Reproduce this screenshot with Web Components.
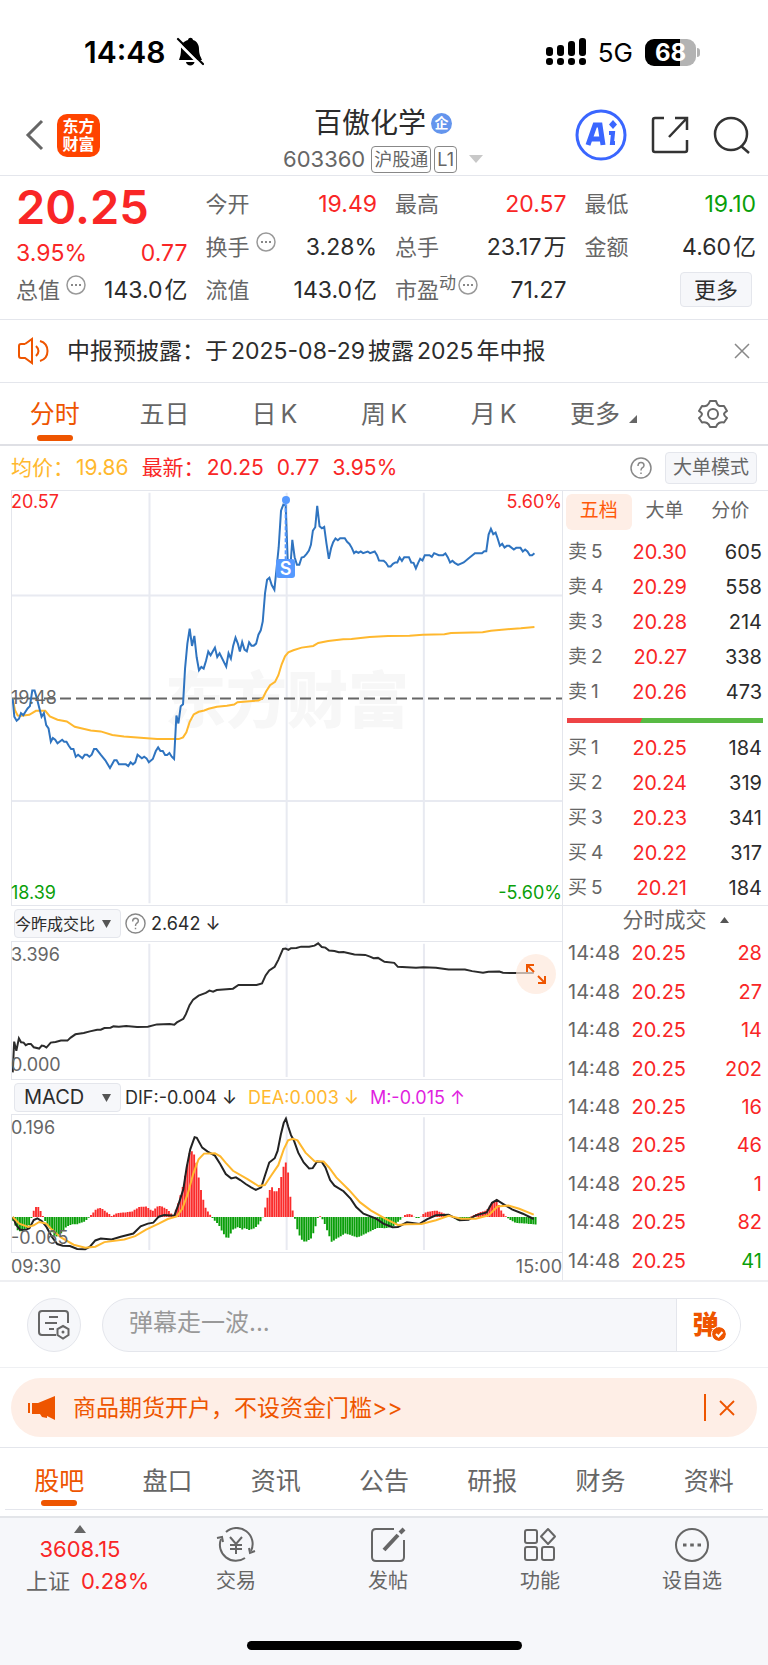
<!DOCTYPE html>
<html lang="zh-CN">
<head>
<meta charset="utf-8">
<meta name="viewport" content="width=device-width, initial-scale=1">
<title>百傲化学 603360</title>
<style>
    :root {
        --red: #f92626;
        --green: #0a9f0a;
        --orange: #ee5500;
        --yellow: #ffb82e;
        --ink: #2c2c2c;
        --grey: #666;
        --line: #e4e6ec;
        --panel: #f6f7fa;
        --peach: #feeee6;
    }
    body {
        margin: 0;
        background: #fff;
        color: var(--ink);
        font-family: Inter, "Noto Sans CJK SC", sans-serif;
        font-size: 22px;
    }
    .market {
        display: grid;
        grid-template-columns: minmax(0, 1fr) 205px;
        border-bottom: 2px solid #eeeff2;
    }
    .charts {
        padding-left: 11px;
        border-right: 1px solid var(--line);
    }
</style>
</head>
<body>
<status-bar></status-bar>
<stock-header>
    <span slot="name">百傲化学</span>
    <span slot="code">603360</span>
</stock-header>
<quote-panel></quote-panel>
<notice-bar>中报预披露：于<i></i>2025-08-29<i></i>披露<i></i>2025<i></i>年中报</notice-bar>
<period-tabs></period-tabs>
<trend-legend></trend-legend>
<div class="market">
    <div class="charts">
        <price-chart></price-chart>
        <ratio-chart></ratio-chart>
        <macd-chart></macd-chart>
    </div>
    <div class="book">
        <order-book></order-book>
        <tick-list></tick-list>
    </div>
</div>
<danmu-bar></danmu-bar>
<promo-banner>商品期货开户，不设资金门槛&gt;&gt;</promo-banner>
<info-tabs></info-tabs>
<bottom-nav></bottom-nav>

<script>
const reset = `
    *, :host{ box-sizing: border-box; }
    :host{ display: block; }
    button, input, select{ font: inherit; color: inherit; border: 0; background: none; padding: 0; margin: 0; }
    a{ color: inherit; text-decoration: none; }
    svg{ display: block; flex: none; }
    .red{ color: var(--red); }
    .green{ color: var(--green); }
`

class BaseElement extends HTMLElement {
    constructor() {
        super()
        this.attachShadow({mode: 'open'})
    }

    connectedCallback() {
        const template = document.createElement('template')
        template.innerHTML = `<style>${reset}${this.getStyles()}</style>${this.getMarkup()}`
        this.shadowRoot.appendChild(template.content.cloneNode(true))
    }
}

class StatusBar extends BaseElement {
    getMarkup() {
        return `
            <div class="left">
                <time>14:48</time>
                <svg width="28" height="30" viewBox="0 0 28 30">
                    <path d="M3 23 C4 20 5 18 5 12 C5 7 8 4 12 3 C12.500 0 16.500 0 17 3 C21 4 23 8 23 12 C23 18 25 20 26 23 Z" fill="#000"/>
                    <path d="M10 25 H18.500 C18 29.500 10.500 29.500 10 25Z" fill="#000"/>
                    <path d="M1 4.500 L25.500 29" stroke="#fff" stroke-width="3"/>
                    <path d="M2 2 L27 27" stroke="#000" stroke-width="2.200" stroke-linecap="round"/>
                </svg>
            </div>
            <div class="right">
                <svg width="40" height="28" viewBox="0 0 40 28">
                    <rect x="0" y="9" width="7" height="9" rx="3"/>
                    <rect x="11" y="7" width="7" height="11" rx="3"/>
                    <rect x="22" y="3" width="7" height="15" rx="3"/>
                    <rect x="33" y="0" width="7" height="18" rx="3"/>
                    <rect x="0" y="20" width="7" height="7" rx="3"/>
                    <rect x="11" y="20" width="7" height="7" rx="3"/>
                    <rect x="22" y="20" width="7" height="7" rx="3"/>
                    <rect x="33" y="20" width="7" height="7" rx="3"/>
                </svg>
                <span class="net">5G</span>
                <span class="battery">68</span><i></i>
            </div>
        `
    }

    getStyles() {
        return `
            :host{ display: flex; justify-content: space-between; align-items: center; height: 104px; padding: 0 68px 0 84px; color: #000; }
            .left, .right{ display: flex; align-items: center; }
            .left{ gap: 11px; }
            time{ font-size: 30px; font-weight: 600; }
            .net{ font-size: 26px; margin: 0 12px; }
            .battery{ width: 51px; height: 27px; border-radius: 9px; background: linear-gradient(90deg, #000 68%, #b3b3b3 68%); color: #fff; font-size: 24px; line-height: 27px; font-weight: 700; text-align: center; }
            i{ width: 3px; height: 9px; margin-left: 1px; border-radius: 0 4px 4px 0; background: #b3b3b3; }
        `
    }
}

class StockHeader extends BaseElement {
    getMarkup() {
        return `
            <div class="side">
                <button aria-label="返回"><svg width="20" height="32" viewBox="0 0 20 32"><path d="M17 2 L3 16 L17 30" fill="none" stroke="#666" stroke-width="3"/></svg></button>
                <a class="logo" href="#">东方<br>财富</a>
            </div>
            <div class="title">
                <h1><slot name="name"></slot><span class="badge">企</span></h1>
                <p><slot name="code"></slot><span class="tag">沪股通</span><span class="tag">L1</span>
                <svg width="14" height="8"><path d="M0 0H14L7 8Z" fill="#c8c8c8"/></svg></p>
            </div>
            <div class="side end">
                <button aria-label="Ai"><svg width="52" height="52" viewBox="0 0 52 52">
                    <circle cx="26" cy="26" r="24" fill="#fff" stroke="#3a66ff" stroke-width="3"/>
                    <path d="M13 36 L20 16 H25 L28 36 M15 30 H27" fill="none" stroke="#3a66ff" stroke-width="5"/>
                    <path d="M34 24 H38 L37 34 H40" fill="none" stroke="#3a66ff" stroke-width="4"/>
                    <path d="M38 11 L42 15.500 L38 20 L34 15.500Z" fill="#3a66ff"/>
                </svg></button>
                <button aria-label="分享"><svg width="38" height="38" viewBox="0 0 38 38" fill="none" stroke="#333" stroke-width="2.500">
                    <path d="M13 2 H4 Q2 2 2 4 V34 Q2 36 4 36 H34 Q36 36 36 34 V24"/>
                    <path d="M24 2 H36 V14 M36 2 L18 21"/>
                </svg></button>
                <button aria-label="搜索"><svg width="38" height="38" viewBox="0 0 38 38" fill="none" stroke="#333" stroke-width="2.500">
                    <circle cx="18" cy="18" r="16"/><path d="M28 30 L36 37"/>
                </svg></button>
            </div>
        `
    }

    getStyles() {
        return `
            :host{ display: grid; grid-template-columns: 1fr auto 1fr; align-items: center; height: 72px; padding: 0 17px; border-bottom: 1px solid var(--line); }
            .side{ display: flex; align-items: center; gap: 12px; height: 62px; align-self: start; padding-left: 8px; }
            .end{ justify-content: flex-end; gap: 24px; padding: 0; }
            .logo{ width: 43px; height: 43px; border-radius: 10px; background: #ff4400; color: #fff; font-size: 16px; line-height: 18px; font-weight: 700; text-align: center; padding-top: 3px; }
            .title{ padding: 0 2px 6px 0; }
            h1{ display: flex; align-items: center; justify-content: center; gap: 5px; margin: 0; font-size: 28px; line-height: 38px; font-weight: 400; }
            .badge{ width: 21px; height: 21px; border-radius: 50%; background: #6495ed; color: #fff; font-size: 14px; line-height: 20px; font-weight: 700; text-align: center; }
            p{ display: flex; align-items: center; gap: 3px; margin: 0; color: var(--grey); font-size: 22px; line-height: 34px; white-space: nowrap; }
            .tag{ border: 1px solid #888; border-radius: 4px; font-size: 18px; line-height: 25px; padding: 0 2px; }
            .tag:first-of-type{ margin-left: 3px; }
            p svg{ margin-left: 9px; }
        `
    }
}

const more = '<svg class="more" width="20" height="20" viewBox="0 0 20 20"><circle cx="10" cy="10" r="9" fill="none" stroke="#999" stroke-width="1.500"/><path d="M5 10h2M9 10h2M13 10h2" stroke="#888" stroke-width="2"/></svg>'
const cell = (label, value, color = '') => `<div class="cell"><dt>${label}</dt><dd class="${color}">${value}</dd></div>`

class QuotePanel extends BaseElement {
    getMarkup() {
        return `
            <dl>
                <div class="main red"><strong>20.25</strong></div>
                <div class="change red"><span>3.95%</span><span>0.77</span></div>
                ${cell('总值' + more, '143.0<i></i>亿')}
            </dl>
            <dl>${cell('今开', '19.49', 'red')}${cell('换手' + more, '3.28%')}${cell('流值', '143.0<i></i>亿')}</dl>
            <dl>${cell('最高', '20.57', 'red')}${cell('总手', '23.17<i></i>万')}${cell('市盈<sup>动</sup>' + more, '71.27')}</dl>
            <dl>${cell('最低', '19.10', 'green')}${cell('金额', '4.60<i></i>亿')}<div class="cell end"><button>更多</button></div></dl>
        `
    }

    getStyles() {
        return `
            :host{ display: grid; grid-template-columns: repeat(4, minmax(0, 1fr)); gap: 18px; height: 144px; padding: 6px 12px 0 16px; border-bottom: 1px solid var(--line); }
            dl{ margin: 0; }
            dt{ display: flex; align-items: center; color: var(--grey); }
            dd{ margin: 0; font-size: 23px; white-space: nowrap; }
            dd i{ display: inline-block; width: 2px; }
            .cell{ display: flex; justify-content: space-between; align-items: center; height: 43px; line-height: 32px; }
            .end{ justify-content: flex-end; padding-right: 4px; }
            .main{ height: 52px; line-height: 50px; font-size: 47px; }
            strong{ font-weight: 600; }
            .change{ display: flex; justify-content: space-between; align-items: flex-end; height: 34px; font-size: 23px; line-height: 30px; }
            .more{ margin: -9px 0 0 6px; }
            sup{ font-size: 17px; line-height: 17px; margin-top: -12px; }
            sup + .more{ margin-left: 2px; }
            button{ width: 72px; height: 35px; border: 1px solid var(--line); border-radius: 4px; background: var(--panel); }
        `
    }
}

class NoticeBar extends BaseElement {
    getMarkup() {
        return `
            <svg width="32" height="28" viewBox="0 0 32 28" fill="none" stroke="#ee5500" stroke-width="2">
                <path d="M7 7 H3 Q1 7 1 9 V19 Q1 21 3 21 H7 L14 26 V2 L7 7"/>
                <path d="M18 9 Q23 14 18 19 M22 4 C32 7 32 21 22 24"/>
            </svg>
            <p><slot></slot></p>
            <button aria-label="关闭"><svg width="16" height="16" viewBox="0 0 16 16"><path d="M1 1L15 15M15 1L1 15" stroke="#888" stroke-width="1.500"/></svg></button>
        `
    }

    getStyles() {
        return `
            :host{ display: flex; align-items: center; height: 63px; padding: 0 18px; border-bottom: 1px solid var(--line); }
            p{ flex: 1; margin: 0 0 0 17px; font-size: 23px; line-height: 32px; white-space: nowrap; }
            ::slotted(i){ display: inline-block; width: 3px; }
        `
    }
}

class PeriodTabs extends BaseElement {
    getMarkup() {
        return `
            <button class="on">分时</button><button>五日</button>
            <button>日<i></i>K</button><button>周<i></i>K</button><button>月<i></i>K</button>
            <button class="drop">更多<svg width="8" height="8"><path d="M8 0V8H0Z" fill="#666"/></svg></button>
            <button aria-label="设置"><svg class="gear" width="30" height="30" viewBox="0 0 30 30" fill="none" stroke="#666" stroke-width="2">
                <path d="M12 2 H18 Q19 6 21.500 7 Q24 7 26 7 L29 12 Q26 14 26 15 Q26 17 29 19 L26 23.500 Q23 23 21 24 Q19 25 18 28 H12 Q11 25 9 24 Q7 23 4 23.500 L1 19 Q4 17 4 15 Q4 14 1 12 L4 7 Q7 7.500 9 6.500 Q11 5 12 2Z" stroke-linejoin="round"/>
                <circle cx="15" cy="15" r="5"/>
            </svg></button>
        `
    }

    getStyles() {
        return `
            :host{ display: flex; height: 63px; border-bottom: 2px solid #dfe0e5; color: var(--grey); }
            button{ flex: 1; position: relative; font-size: 25px; line-height: 30px; }
            i{ display: inline-block; width: 4px; }
            .on{ color: var(--orange); }
            .on::after{ content: ""; position: absolute; left: 50%; bottom: 3px; width: 36px; height: 6px; margin-left: -18px; border-radius: 3px; background: var(--orange); }
            .drop svg{ display: inline-block; margin-left: 9px; }
            .gear{ margin: 0 auto; }
        `
    }
}

const help = size => `<svg class="help" width="${size}" height="${size}" viewBox="0 0 22 22" fill="none" stroke="#888" stroke-width="1.500"><circle cx="11" cy="11" r="10"/><path d="M8 9 Q8 5.500 11 5.500 Q14 5.500 14 8.500 Q14 10 12 11 Q11 11.800 11 13.500 M11 15.500V17"/></svg>`

class TrendLegend extends BaseElement {
    getMarkup() {
        return `
            <span class="avg">均价：<i></i>19.86</span>
            <span class="red">最新：<i></i>20.25</span><span class="red">0.77</span><span class="red">3.95%</span>
            ${help(22)}
            <button>大单模式</button>
        `
    }

    getStyles() {
        return `
            :host{ display: flex; align-items: center; gap: 13px; height: 44px; padding: 0 11px; font-size: 21px; line-height: 30px; white-space: nowrap; }
            i{ display: inline-block; width: 2px; }
            .avg{ color: var(--yellow); }
            .help{ margin-left: auto; }
            button{ height: 32px; padding: 0 7px; border: 1px solid var(--line); border-radius: 4px; background: var(--panel); color: var(--grey); font-size: 19px; }
        `
    }
}

// charts: points are kept in each chart's own viewBox units and stretch with the column
const chartStyles = `
    .plot{ position: relative; border-top: 1px solid var(--line); border-bottom: 1px solid var(--line); border-left: 1px solid var(--line); color: var(--grey); font-size: 18px; line-height: 22px; }
    .plot svg.lines{ width: 100%; height: 100%; }
    .plot path{ vector-effect: non-scaling-stroke; fill: none; }
    .grid{ stroke: #e8eaf1; stroke-width: 2px; }
    .label{ position: absolute; left: 0; margin-left: -1px; }
    .right{ left: auto; right: 0; }
    .bar{ display: flex; align-items: center; height: 35px; padding-left: 3px; font-size: 18px; white-space: nowrap; }
    .pick{ position: relative; width: 107px; height: 29px; border: 1px solid var(--line); border-radius: 4px; background: var(--panel); }
    .pick svg{ position: absolute; right: 9px; top: 10px; pointer-events: none; }
    select{ width: 100%; height: 100%; appearance: none; }
`
const picker = (label, value) => `<div class="pick"><select aria-label="${label}"><option>${value}</option></select><svg width="9" height="8"><path d="M0 0H9L4.500 8Z" fill="#555"/></svg></div>`

class PriceChart extends BaseElement {
    getMarkup() {
        const price = '35,655 40,710 47,722 54,716 60,699 67,705 74,694 80,685 87,678 94,631 101,631 108,655 115,683 122,710 129,699 136,735 143,745 150,785 156,774 163,779 170,790 184,779 190,785 197,785 204,797 211,807 218,807 225,830 232,824 245,835 252,824 259,824 266,830 273,824 280,807 287,807 300,824 314,841 328,864 341,841 348,841 355,853 376,853 383,858 390,847 397,853 404,847 411,824 424,835 431,830 438,835 445,847 457,837 466,813 473,802 480,813 487,813 494,825 500,825 507,819 514,830 521,837 528,706 534,730 541,678 548,672 554,565 561,490 568,445 575,497 582,467 589,531 596,570 603,560 610,565 617,542 624,514 631,525 644,502 651,530 658,519 678,559 685,519 692,535 699,496 706,472 713,490 719,514 726,485 733,508 740,513 747,486 754,496 761,496 768,490 775,463 782,450 788,423 795,337 801,298 808,292 815,314 823,328 829,270 836,200 843,90 850,72 857,75 863,235 871,262 877,178 884,230 891,253 898,253 905,231 912,229 920,220 927,210 933,193 939,150 946,140 952,76 959,137 966,143 973,139 980,190 987,235 994,202 1000,185 1007,174 1014,179 1021,173 1035,173 1042,184 1049,190 1056,202 1063,218 1069,213 1076,217 1083,213 1090,218 1104,213 1111,218 1125,213 1132,224 1138,240 1152,241 1159,247 1166,258 1173,258 1180,250 1187,246 1193,246 1200,231 1207,241 1214,230 1228,230 1235,246 1242,247 1249,264 1256,247 1262,235 1269,240 1276,224 1290,224 1297,229 1304,218 1318,224 1331,224 1338,219 1345,230 1352,246 1359,241 1366,247 1376,253 1393,246 1410,232 1427,218 1448,218 1455,212 1461,212 1468,162 1475,145 1482,161 1489,156 1495,173 1502,196 1509,190 1516,201 1523,196 1530,196 1544,207 1551,202 1564,202 1571,213 1578,207 1585,213 1592,224 1599,224 1606,218'
        const average = '35,655 42,690 50,706 62,707 85,704 105,692 133,692 147,709 170,719 198,724 222,740 270,751 300,754 335,765 370,769 430,774 470,777 535,777 548,772 558,757 568,725 580,703 595,695 612,691 625,686 650,680 680,677 702,673 712,666 775,661 788,654 798,634 810,615 825,605 835,585 845,552 855,528 865,516 880,510 905,502 940,497 955,488 985,482 1030,477 1055,476 1110,470 1165,467 1230,466 1270,463 1335,462 1355,458 1450,456 1475,451 1535,446 1565,444 1606,440'
        return `
            <div class="plot">
                <span class="watermark">东方财富</span>
                <svg class="lines" viewBox="33 31 1656 1245" preserveAspectRatio="none">
                    <path class="grid" d="M447 36V1271M860 36V1271M1273 36V1271M33 345H1689M33 963H1689"/>
                    <path d="M33 655H1689" stroke="#666" stroke-width="2" stroke-dasharray="11 5"/>
                    <path d="M${average}" stroke="#ffb82e" stroke-width="2"/>
                    <path d="M${price}" stroke="#2f74c0" stroke-width="2"/>
                    <path d="M857 65V240" stroke="#5599ff" stroke-width="2" stroke-dasharray="4 2"/>
                </svg>
                <i class="dot"></i><span class="sell">S</span>
                <span class="label top red">20.57</span><span class="label top right red">5.60%</span>
                <span class="label mid">19.48</span>
                <span class="label low green">18.39</span><span class="label low right green">-5.60%</span>
            </div>
        `
    }

    getStyles() {
        return chartStyles + `
            .plot{ height: 416px; }
            .top{ top: 0; }
            .mid{ top: 196px; }
            .low{ bottom: 1px; }
            .watermark{ position: absolute; left: 50%; top: 174px; transform: translateX(-50%); color: #f7f7f7; font: 900 61px/64px "Noto Sans CJK SC", sans-serif; white-space: nowrap; }
            .plot svg{ position: relative; }
            .dot, .sell{ position: absolute; left: 50%; background: #5599ff; }
            .dot{ top: 5px; width: 8px; height: 8px; margin-left: -5px; border-radius: 50%; }
            .sell{ top: 68px; width: 19px; height: 19px; margin-left: -11px; border-radius: 3px; color: #fff; font-size: 18px; line-height: 19px; font-weight: 600; text-align: center; }
        `
    }
}

class RatioChart extends BaseElement {
    getMarkup() {
        const ratio = '32,548 36,455 42,483 49,445 55,457 62,458 68,466 75,462 82,462 90,472 105,476 112,467 118,468 125,473 137,458 150,456 165,452 183,452 192,443 205,433 228,429 245,424 265,419 275,419 285,414 302,413 310,409 325,410 345,408 375,411 405,410 430,403 465,402 478,404 485,397 503,386 510,372 520,345 530,328 545,316 565,308 575,301 585,304 595,299 640,295 655,284 705,284 720,279 730,255 740,240 755,229 765,208 778,175 785,174 793,178 800,173 815,172 828,168 850,168 865,165 875,158 885,169 895,171 905,180 920,181 932,185 945,184 975,192 1005,193 1018,198 1028,203 1040,202 1058,214 1085,217 1095,229 1145,232 1165,230 1200,232 1235,237 1280,237 1300,242 1330,247 1345,244 1375,243 1385,247 1430,248 1470,248'
        return `
            <div class="bar">${picker('指标', '今昨成交比')}${help(21)}<span>2.642 ↓</span></div>
            <div class="plot">
                <svg class="lines" viewBox="30 154 1518 414" preserveAspectRatio="none">
                    <path class="grid" d="M409 159V562M788 159V562M1167 159V562"/>
                    <path d="M${ratio}" stroke="#2c2c2c" stroke-width="2"/>
                </svg>
                <button aria-label="全屏"><svg width="22" height="22" viewBox="0 0 22 22" fill="none" stroke="#ee5500" stroke-width="2">
                    <path d="M2 9V2H9M2 2L9 9M20 13V20H13M20 20L13 13"/></svg></button>
                <span class="label top">3.396</span><span class="label low">0.000</span>
            </div>
        `
    }

    getStyles() {
        return chartStyles + `
            .plot{ height: 139px; }
            .top{ top: 2px; }
            .low{ bottom: 3px; }
            select{ font-size: 16px; }
            .help{ margin: 0 5px 0 4px; }
            button{ position: absolute; right: 6px; top: 12px; width: 40px; height: 40px; border-radius: 50%; background: rgba(254, 232, 220, .7); }
            button svg{ margin: 0 auto; }
        `
    }
}

class MacdChart extends BaseElement {
    // one bar a minute, heights read off a coarse envelope around the zero line
    getBars(sign) {
        const shape = [[30, -4], [45, -40], [55, -44], [65, -40], [80, -22], [86, 10], [95, 30], [103, 30], [112, 12], [118, -5], [130, -28], [150, -62], [165, -50], [180, -30], [195, -22], [210, -22], [230, -14], [240, -4], [250, 8], [262, 24], [275, 28], [290, 16], [305, 3], [320, 12], [340, 14], [360, 16], [380, 30], [400, 32], [418, 18], [432, 33], [445, 32], [460, 22], [475, 4], [485, 30], [500, 85], [512, 150], [522, 205], [532, 192], [540, 160], [548, 100], [556, 60], [565, 25], [575, 10], [585, -6], [600, -22], [612, -48], [625, -68], [640, -38], [655, -30], [665, -38], [675, -32], [682, -40], [700, -34], [712, -20], [722, -3], [730, 35], [740, 80], [748, 90], [757, 72], [768, 90], [776, 140], [783, 165], [790, 165], [795, 90], [802, 30], [810, 0], [818, -40], [828, -68], [840, -76], [855, -66], [865, -40], [875, 0], [880, 3], [890, -12], [903, -50], [912, -75], [925, -66], [950, -50], [985, -62], [1010, -48], [1040, -32], [1060, -34], [1080, -30], [1100, -10], [1115, 6], [1130, 10], [1145, -3], [1155, -3], [1170, 14], [1200, 20], [1225, 10], [1240, 3], [1260, -10], [1285, -8], [1300, 4], [1320, 14], [1340, 20], [1355, 45], [1368, 52], [1380, 20], [1390, 5], [1400, -5], [1420, -18], [1470, -22], [1480, -24]]
        let d = ''
        for (let i = 0; i < 229; i++) {
            const x = 33 + i * 6.325
            const n = shape.findIndex(point => point[0] > x)
            const [x0, h0] = shape[n - 1]
            const [x1, h1] = shape[n]
            const h = h0 + (h1 - h0) * (x - x0) / (x1 - x0)
            if (h * sign > 0) d += `M${x} 440V${Math.round(440 - h)}`
        }
        return d
    }

    getMarkup() {
        const dif = '32,440 42,465 52,478 65,480 78,474 90,449 100,444 112,452 125,470 140,500 155,522 170,527 190,528 210,537 232,538 245,530 260,511 275,505 305,508 330,500 365,490 385,468 405,460 420,457 435,439 450,434 478,436 490,400 503,355 512,290 522,235 534,198 540,200 555,230 570,242 590,254 605,280 620,310 635,323 648,320 660,328 675,340 690,350 703,358 718,350 728,315 740,275 755,262 763,240 772,190 780,155 786,142 792,165 800,192 808,208 820,245 835,275 850,293 860,292 872,272 885,273 895,290 908,328 920,345 945,362 965,385 980,410 1000,430 1035,445 1055,460 1080,471 1095,470 1120,456 1155,461 1175,447 1200,435 1235,433 1265,450 1290,448 1310,435 1340,426 1355,397 1368,388 1385,400 1410,417 1440,430 1470,446'
        const dea = '32,440 50,460 75,470 90,465 105,455 125,460 140,478 165,502 200,524 232,533 260,530 285,516 340,508 370,498 400,478 435,460 460,446 485,438 500,415 515,370 530,310 545,265 560,248 590,247 605,256 620,276 640,300 680,325 710,346 728,343 745,315 765,283 780,235 792,208 805,203 818,208 840,245 865,271 890,272 905,290 925,320 960,358 990,395 1020,420 1060,445 1095,464 1120,462 1160,461 1200,450 1235,436 1270,445 1310,445 1345,435 1370,408 1400,405 1430,415 1470,433'
        return `
            <div class="bar">${picker('副图指标', 'MACD')}<span>DIF:-0.004 ↓</span><span class="dea">DEA:0.003 ↓</span><span class="m">M:-0.015 ↑</span></div>
            <div class="plot">
                <svg class="lines" viewBox="30 131 1518 415" preserveAspectRatio="none">
                    <path class="grid" d="M409 138V540M788 138V540M1167 138V540"/>
                    <path d="${this.getBars(1)}" stroke="#fb2c2c" stroke-width="1.900"/>
                    <path d="${this.getBars(-1)}" stroke="#0a9f0a" stroke-width="1.900"/>
                    <path d="M${dif}" stroke="#222" stroke-width="2"/>
                    <path d="M${dea}" stroke="#ffb82e" stroke-width="2"/>
                </svg>
                <span class="label top">0.196</span><span class="label low">-0.065</span>
            </div>
            <div class="axis"><time>09:30</time><time>15:00</time></div>
        `
    }

    getStyles() {
        return chartStyles + `
            .plot{ height: 139px; }
            .top{ top: 2px; }
            .low{ bottom: 3px; }
            .bar{ gap: 11px; height: 34px; }
            .bar .pick + span{ margin-left: -7px; }
            select{ font-size: 20px; padding-left: 9px; }
            .dea{ color: var(--yellow); }
            .m{ color: #e01fe0; }
            .axis{ display: flex; justify-content: space-between; height: 25px; color: var(--grey); font-size: 18px; line-height: 27px; }
        `
    }
}

class OrderBook extends BaseElement {
    getRows(side, rows) {
        return rows.map(([level, price, amount]) => `<tr><th>${side}<i></i>${level}</th><td class="red">${price}</td><td>${amount}</td></tr>`).join('')
    }

    getMarkup() {
        return `
            <nav><button class="on">五档</button><button>大单</button><button>分价</button></nav>
            <table>${this.getRows('卖', [[5, '20.30', 605], [4, '20.29', 558], [3, '20.28', 214], [2, '20.27', 338], [1, '20.26', 473]])}</table>
            <div class="ratio"></div>
            <table>${this.getRows('买', [[1, '20.25', 184], [2, '20.24', 319], [3, '20.23', 341], [4, '20.22', 317], [5, '20.21', 184]])}</table>
        `
    }

    getStyles() {
        return `
            :host{ height: 416px; padding: 3px 5px 0 3px; border-top: 1px solid var(--line); border-bottom: 1px solid var(--line); }
            nav{ display: flex; height: 36px; margin-bottom: 4px; color: var(--grey); font-size: 19px; line-height: 24px; }
            nav button{ flex: 1; padding-bottom: 3px; }
            .on{ border-radius: 6px; background: var(--peach); color: #ff5a0a; }
            table{ width: 100%; border-spacing: 0; table-layout: fixed; font-size: 20px; line-height: 24px; }
            th, td{ height: 35px; padding: 0; text-align: right; font-weight: 400; }
            th{ width: 50px; padding-left: 2px; text-align: left; color: var(--grey); font-size: 19px; }
            th i{ display: inline-block; width: 4px; }
            td.red{ width: 71px; }
            td:last-child{ padding-right: 1px; }
            .ratio{ height: 5px; margin: 9px 0 7px 1px; background: linear-gradient(120deg, #ee4446 38%, #58ba44 38%); }
        `
    }
}

class TickList extends BaseElement {
    getMarkup() {
        const rows = [28, 27, 14, 202, 16, 46, 1, 82, 41].map(amount => `<tr><th>14:48</th><td class="red">20.25</td><td class="${amount === 41 ? 'green' : 'red'}">${amount}</td></tr>`).join('')
        return `
            <button>分时成交<svg width="9" height="6"><path d="M0 6H9L4.500 0Z" fill="#555"/></svg></button>
            <table>${rows}</table>
        `
    }

    getStyles() {
        return `
            :host{ padding: 0 6px 0 5px; }
            button{ display: flex; align-items: center; justify-content: center; gap: 13px; width: 100%; height: 28px; padding-left: 21px; color: var(--grey); font-size: 21px; line-height: 26px; }
            table{ width: 100%; height: 346px; border-spacing: 0; table-layout: fixed; font-size: 20px; line-height: 24px; }
            th, td{ padding: 0; text-align: right; font-weight: 400; }
            th{ width: 53px; text-align: left; color: var(--grey); }
            td:nth-child(2){ width: 65px; }
        `
    }
}

class DanmuBar extends BaseElement {
    getMarkup() {
        return `
            <button class="set" aria-label="弹幕设置"><svg width="34" height="32" viewBox="0 0 34 32" fill="none" stroke="#666" stroke-width="2">
                <path d="M19 26 H5 Q2 26 2 23 V5 Q2 2 5 2 H28 Q31 2 31 5 V14 M12 8H21M8 14H20M12 20H17"/>
                <path d="M26 17 L31.500 20 V26 L26 29.500 L20.500 26 V20Z"/><circle cx="26" cy="23" r="1.500" fill="#666" stroke="none"/>
            </svg></button>
            <div class="box">
                <input type="text" placeholder="弹幕走一波..." aria-label="弹幕">
                <button class="send"><span>弹</span><svg width="14" height="14" viewBox="0 0 14 14"><circle cx="7" cy="7" r="7" fill="#ee5500"/><path d="M4 7L6.500 9.500L10.500 5" fill="none" stroke="#fff" stroke-width="2"/></svg></button>
            </div>
        `
    }

    getStyles() {
        return `
            :host{ display: flex; align-items: center; gap: 21px; height: 86px; padding: 0 27px; border-bottom: 1px solid #eff0f3; }
            .set{ display: grid; place-items: center; flex: none; width: 54px; height: 54px; border: 1px solid var(--line); border-radius: 50%; background: var(--panel); }
            .box{ display: flex; flex: 1; height: 54px; overflow: hidden; border: 1px solid var(--line); border-radius: 27px; background: var(--panel); }
            input{ flex: 1; min-width: 0; padding: 0 0 4px 26px; font-size: 24px; outline: none; }
            input::placeholder{ color: #999; opacity: 1; }
            .send{ position: relative; width: 64px; padding: 0 6px 4px 0; border-left: 1px solid var(--line); background: #fff; color: var(--orange); font-size: 26px; font-weight: 800; }
            .send svg{ position: absolute; left: 34px; bottom: 9px; box-sizing: content-box; border: 1px solid #fff; border-radius: 50%; }
        `
    }
}

class PromoBanner extends BaseElement {
    getMarkup() {
        return `
            <div class="pill">
                <svg width="28" height="24" viewBox="0 0 28 24" fill="#ee5500"><path d="M0 7H2V17H0ZM4 7 H10 L27 0 V24 L19 20 V22 L14 21 L12 18 H4Z"/></svg>
                <a href="#"><slot></slot></a>
                <button aria-label="关闭"><svg width="16" height="16" viewBox="0 0 16 16"><path d="M1 1L15 15M15 1L1 15" stroke="#ee5500" stroke-width="1.800"/></svg></button>
            </div>
        `
    }

    getStyles() {
        return `
            :host{ padding: 10px 11px; border-bottom: 1px solid var(--line); color: var(--orange); }
            .pill{ display: flex; align-items: center; height: 59px; padding: 0 22px 0 17px; border-radius: 30px; background: var(--peach); }
            a{ flex: 1; margin-left: 17px; font-size: 23px; line-height: 32px; white-space: nowrap; }
            button{ height: 27px; padding-left: 13px; border-left: 2px solid var(--orange); }
        `
    }
}

class InfoTabs extends BaseElement {
    getMarkup() {
        return ['股吧', '盘口', '资讯', '公告', '研报', '财务', '资料'].map((name, i) => `<button class="${i ? '' : 'on'}">${name}</button>`).join('')
    }

    getStyles() {
        return `
            :host{ display: flex; height: 62px; margin: 0 5px 6px; border-bottom: 1px solid var(--line); color: var(--grey); }
            button{ flex: 1; position: relative; font-size: 25px; }
            .on{ color: var(--orange); }
            .on::after{ content: ""; position: absolute; left: 50%; bottom: 3px; width: 36px; height: 6px; margin-left: -18px; border-radius: 3px; background: var(--orange); }
        `
    }
}

class BottomNav extends BaseElement {
    getMarkup() {
        return `
            <nav>
                <a class="index" href="#">
                    <span class="value red"><svg width="12" height="8"><path d="M0 8H12L6 0Z" fill="#666"/></svg>3608.15</span>
                    <span class="name">上证 <b class="red">0.28%</b></span>
                </a>
                <a href="#"><svg width="40" height="36" viewBox="0 0 40 36" fill="none" stroke="#666" stroke-width="2">
                    <path d="M10 5 A16 16 0 0 1 35 24 M29 31 A16 16 0 0 1 5 12"/><path d="M1 11 L6 10 L7 15 M39 24 L34 26 L33 21"/>
                    <path d="M14 10 L20 17 L26 10 M20 17 V27 M14 18 H26 M14 22 H26"/></svg>交易</a>
                <a href="#"><svg width="36" height="36" viewBox="0 0 36 36" fill="none" stroke="#666" stroke-width="2">
                    <path d="M24 2 H6 Q2 2 2 6 V30 Q2 34 6 34 H30 Q34 34 34 30 V13"/><path d="M14 23 L28 8" stroke-width="4"/><path d="M30 6L34 2" stroke-width="4"/></svg>发帖</a>
                <a href="#"><svg width="34" height="36" viewBox="0 0 34 36" fill="none" stroke="#666" stroke-width="2">
                    <rect x="2" y="3" width="12" height="13" rx="2"/><rect x="2" y="20" width="12" height="13" rx="2"/><rect x="19" y="20" width="12" height="13" rx="2"/>
                    <path d="M25 2 L32 9.500 L25 17 L18 9.500Z" stroke-linejoin="round"/></svg>功能</a>
                <a href="#"><svg width="36" height="36" viewBox="0 0 36 36" fill="none" stroke="#666" stroke-width="2">
                    <circle cx="18" cy="18" r="16"/><path d="M9 18H12.500M16.200 18H19.800M23.500 18H27" stroke-width="3"/></svg>设自选</a>
            </nav>
            <div class="home"></div>
        `
    }

    getStyles() {
        return `
            :host{ height: 149px; border-top: 2px solid #e3e5e9; background: var(--panel); color: var(--grey); }
            nav{ display: grid; grid-template-columns: 160px repeat(4, 1fr); height: 110px; font-size: 20px; line-height: 28px; }
            a{ display: flex; flex-direction: column; align-items: center; gap: 4px; padding-top: 9px; }
            .index{ align-items: stretch; gap: 0; padding-top: 7px; font-size: 22px; line-height: 32px; white-space: nowrap; }
            .value{ display: flex; flex-direction: column; align-items: center; }
            .name{ display: flex; gap: 11px; padding-left: 26px; }
            b{ font-weight: 400; }
            .home{ width: 275px; height: 9px; margin: 13px auto 0; border-radius: 5px; background: #000; }
        `
    }
}

customElements.define('status-bar', StatusBar)
customElements.define('stock-header', StockHeader)
customElements.define('quote-panel', QuotePanel)
customElements.define('notice-bar', NoticeBar)
customElements.define('period-tabs', PeriodTabs)
customElements.define('trend-legend', TrendLegend)
customElements.define('price-chart', PriceChart)
customElements.define('ratio-chart', RatioChart)
customElements.define('macd-chart', MacdChart)
customElements.define('order-book', OrderBook)
customElements.define('tick-list', TickList)
customElements.define('danmu-bar', DanmuBar)
customElements.define('promo-banner', PromoBanner)
customElements.define('info-tabs', InfoTabs)
customElements.define('bottom-nav', BottomNav)
</script>
</body>
</html>
